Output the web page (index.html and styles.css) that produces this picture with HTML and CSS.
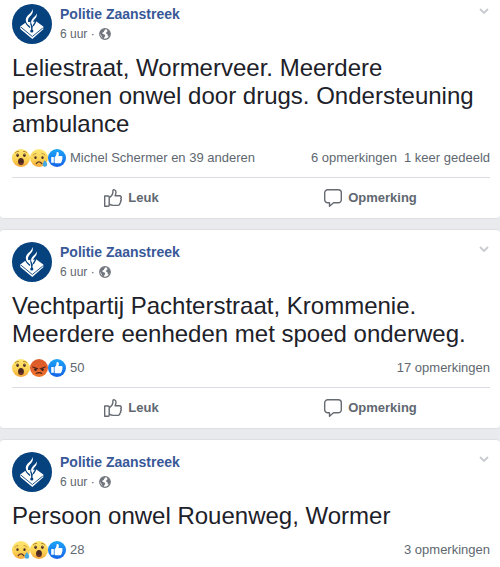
FILE: index.html
```html
<!DOCTYPE html>
<html lang="nl">
<head>
<meta charset="utf-8">
<meta name="viewport" content="width=device-width, initial-scale=1">
<title>Politie Zaanstreek</title>
<link rel="stylesheet" href="styles.css">
</head>
<body>
<svg class="sprite" aria-hidden="true">
  <defs>
    <linearGradient id="yellow" x1="0" y1="0" x2="0" y2="1"><stop offset="0" stop-color="#ffe874"/><stop offset=".6" stop-color="#fbd153"/><stop offset="1" stop-color="#f4a63a"/></linearGradient>
    <linearGradient id="red" x1="0" y1="0" x2="0" y2="1"><stop offset="0" stop-color="#dc5a28"/><stop offset=".5" stop-color="#e3602c"/><stop offset="1" stop-color="#f0782c"/></linearGradient>
    <linearGradient id="blue" x1="0" y1="0" x2="0" y2="1"><stop offset="0" stop-color="#1ba4f8"/><stop offset="1" stop-color="#1563e6"/></linearGradient>
  </defs>
  <symbol id="avatar" viewBox="0 0 40 40">
    <circle cx="20" cy="20" r="20" fill="#05427e"/>
    <path d="M8.300 22.500 14 18.200l10.500-.7 6.800 5v2.700L20.300 35 8.300 25z" fill="#fff"/>
    <path d="m9 23.200 11.300 9.300 10.500-8.500" fill="none" stroke="#05427e" stroke-width=".9"/>
    <path d="M13.300 17.500c1 2.500 2.700 4.200 4.700 6M19 18c-.5 2.500.7 3.500 1.200 5.500M23.500 16.500c.3 2.500-1.500 3.500-2.300 5.500" fill="none" stroke="#05427e" stroke-width="1.400"/>
    <circle cx="19.800" cy="27" r="1.600" fill="#05427e"/>
    <path d="M19.800 22v4" stroke="#05427e" stroke-width="1.400"/>
    <path d="M20.500 5c1.200 3.700-.8 5.600-2.800 7.700-2.500 2.800-2.300 5.500.8 9.800-4.500-3-6-6.500-3.500-10C17 10 20 8.500 20.500 5z" fill="#fff"/>
    <path d="M24.500 9.500c1 3-.8 4.500-2.500 6.500-1.500 1.800-1.800 3.500-.8 6-2.500-3-2.700-5-.7-7.300 1.800-2 3.500-3 4-5.200z" fill="#fff"/>
  </symbol>
  <symbol id="globe" viewBox="0 0 12 12">
    <circle cx="6" cy="6" r="5.300" fill="#fff" stroke="#70757d" stroke-width="1.200"/>
    <path d="M.8 5C1.300 2.700 3 1 5.500.9l1 .9-1.300.9-.4 1.200-1.600.8.600 1.200 1.800.5.800 1.500-1 1.200-.5 1.700C3 10.500 2.700 7.500.8 5zM7.500 1.200C9.700 1.700 11.300 3.700 11.200 6.200L10 8.700 8.800 8.200 8.600 6.500 7.200 5.700 7.400 4l1.300-.8z" fill="#70757d"/>
  </symbol>
  <symbol id="chevron" viewBox="0 0 10 6"><path d="m1 1 4 4 4-4" fill="none" stroke="#c7cacf" stroke-width="1.800"/></symbol>
  <symbol id="wow" viewBox="0 0 18 18">
    <circle cx="9" cy="9" r="9" fill="url(#yellow)"/>
    <path d="M3.300 3.700Q4.500 2 6.500 2.400M11.500 2.400q2-.4 3.200 1.300" fill="none" stroke="#ae7a2b" stroke-width=".9" stroke-linecap="round"/>
    <ellipse cx="5.600" cy="6.300" rx="1.300" ry="1.700" fill="#493027"/><ellipse cx="12.400" cy="6.300" rx="1.300" ry="1.700" fill="#493027"/>
    <circle cx="5.900" cy="5.600" r=".5" fill="#ad8a65"/><circle cx="12.700" cy="5.600" r=".5" fill="#ad8a65"/>
    <ellipse cx="9" cy="12.400" rx="2.900" ry="3.500" fill="#4b2822"/><path d="M7 14.400q2-2 4 0-2 2-4 0z" fill="#7b3429"/>
  </symbol>
  <symbol id="sad" viewBox="0 0 18 18">
    <circle cx="9" cy="9" r="9" fill="url(#yellow)"/>
    <path d="M3 6.200q1-1.500 3-1.700M12 4.500q2 .2 3 1.700" fill="none" stroke="#b58333" stroke-width=".8" stroke-linecap="round"/>
    <ellipse cx="5.500" cy="8.700" rx="1.200" ry="1.400" fill="#493027"/><ellipse cx="12.500" cy="8.700" rx="1.200" ry="1.400" fill="#493027"/>
    <path d="M6.300 14.500q2.700-3.200 5.400 0" fill="none" stroke="#5b3728" stroke-width="1.300" stroke-linecap="round"/>
    <path d="M14.900 11c1 1.700 2.300 3 2.300 4.500a2.300 2.300 0 0 1-4.600 0c0-1.500 1.300-2.800 2.300-4.500z" fill="#45a9df"/>
  </symbol>
  <symbol id="angry" viewBox="0 0 18 18">
    <circle cx="9" cy="9" r="9" fill="url(#red)"/>
    <path d="m2.800 8 5 1.700M15.200 8l-5 1.700" stroke="#50241a" stroke-width="1.200" stroke-linecap="round"/>
    <circle cx="5.500" cy="10.600" r="1.300" fill="#35201c"/><circle cx="12.500" cy="10.600" r="1.300" fill="#35201c"/>
    <path d="M6.300 14.300q2.700-1.500 5.400 0" fill="none" stroke="#47251b" stroke-width="1.200" stroke-linecap="round"/>
  </symbol>
  <symbol id="liked" viewBox="0 0 18 18">
    <circle cx="9" cy="9" r="9" fill="url(#blue)"/>
    <path d="M3.200 7.900h2.600v5.900H3.200zM6.600 8.200c1-.7 2-2 2-4.600 0-1.200 2.300-.9 2.300 1.100 0 1-.3 1.700-.5 2.300h3.100c1.200 0 1.500 1.400.6 2 .8.700.6 1.600-.2 2 .4.800.1 1.500-.5 1.800.1.900-.6 1.500-1.500 1.500H8.700c-.8 0-1.500-.2-2.100-.6z" fill="#fff"/>
  </symbol>
  <symbol id="like" viewBox="0 0 18 18">
    <path d="M.7 7h3.500a1 1 0 0 1 1 1v8.200a1 1 0 0 1-1 1H.7zM5.200 8.800C7.200 7.500 8.700 5.800 8.900 3.500V1.700C8.900.3 12 .3 12 3.300c0 1.300-.4 2.400-.9 3.500h4.300c1.900 0 2.300 1.800 1.300 2.700.9.800.7 2.100-.2 2.500.5 1 .1 1.900-.7 2.300.1 1.300-.6 2.100-1.900 2.100H9.300c-1.500 0-2.500-.3-4.100-1.200" fill="none" stroke="#666b72" stroke-width="1.400" stroke-linejoin="round"/>
  </symbol>
  <symbol id="comment" viewBox="0 0 18 18">
    <path d="M3.700.8h10.600a3 3 0 0 1 3 3v7a3 3 0 0 1-3 3H9.500l-4 3.400v-3.400H3.700a3 3 0 0 1-3-3v-7a3 3 0 0 1 3-3z" fill="none" stroke="#666b72" stroke-width="1.400" stroke-linejoin="round"/>
  </symbol>
</svg>

<main class="feed">
  <article class="post">
    <header class="post-header">
      <svg class="avatar" aria-hidden="true"><use href="#avatar"/></svg>
      <div class="byline">
        <a class="author" href="#">Politie Zaanstreek</a>
        <div class="meta">6 uur · <svg class="globe" aria-hidden="true"><use href="#globe"/></svg></div>
      </div>
      <button class="more" type="button" aria-label="Meer opties"><svg aria-hidden="true"><use href="#chevron"/></svg></button>
    </header>
    <p class="message">Leliestraat, Wormerveer. Meerdere personen onwel door drugs. Ondersteuning ambulance</p>
    <div class="stats">
      <div class="reactions"><svg><use href="#wow"/></svg><svg><use href="#sad"/></svg><svg><use href="#liked"/></svg></div>
      <span>Michel Schermer en 39 anderen</span>
      <div class="counts"><a href="#">6 opmerkingen</a><a href="#">1 keer gedeeld</a></div>
    </div>
    <div class="actions">
      <button type="button"><svg aria-hidden="true"><use href="#like"/></svg>Leuk</button>
      <button type="button"><svg aria-hidden="true"><use href="#comment"/></svg>Opmerking</button>
    </div>
  </article>

  <article class="post">
    <header class="post-header">
      <svg class="avatar" aria-hidden="true"><use href="#avatar"/></svg>
      <div class="byline">
        <a class="author" href="#">Politie Zaanstreek</a>
        <div class="meta">6 uur · <svg class="globe" aria-hidden="true"><use href="#globe"/></svg></div>
      </div>
      <button class="more" type="button" aria-label="Meer opties"><svg aria-hidden="true"><use href="#chevron"/></svg></button>
    </header>
    <p class="message">Vechtpartij Pachterstraat, Krommenie. Meerdere eenheden met spoed onderweg.</p>
    <div class="stats">
      <div class="reactions"><svg><use href="#wow"/></svg><svg><use href="#angry"/></svg><svg><use href="#liked"/></svg></div>
      <span>50</span>
      <div class="counts"><a href="#">17 opmerkingen</a></div>
    </div>
    <div class="actions">
      <button type="button"><svg aria-hidden="true"><use href="#like"/></svg>Leuk</button>
      <button type="button"><svg aria-hidden="true"><use href="#comment"/></svg>Opmerking</button>
    </div>
  </article>

  <article class="post">
    <header class="post-header">
      <svg class="avatar" aria-hidden="true"><use href="#avatar"/></svg>
      <div class="byline">
        <a class="author" href="#">Politie Zaanstreek</a>
        <div class="meta">6 uur · <svg class="globe" aria-hidden="true"><use href="#globe"/></svg></div>
      </div>
      <button class="more" type="button" aria-label="Meer opties"><svg aria-hidden="true"><use href="#chevron"/></svg></button>
    </header>
    <p class="message">Persoon onwel Rouenweg, Wormer</p>
    <div class="stats">
      <div class="reactions"><svg><use href="#sad"/></svg><svg><use href="#wow"/></svg><svg><use href="#liked"/></svg></div>
      <span>28</span>
      <div class="counts"><a href="#">3 opmerkingen</a></div>
    </div>
  </article>
</main>
</body>
</html>
```
FILE: styles.css
```css
* { box-sizing: border-box; }

body {
  margin: 0;
  background: #e9eaed;
  color: #606770;
  font: 13px/18px "Liberation Sans", Arial, sans-serif;
}

a { color: inherit; text-decoration: none; }

button {
  padding: 0;
  border: 0;
  background: none;
  color: inherit;
  font: inherit;
  cursor: pointer;
}

svg { display: block; flex: none; }

.sprite { position: absolute; width: 0; height: 0; }

.feed {
  display: flex;
  flex-direction: column;
  gap: 10px;
  min-height: 100vh;
}

.post {
  padding: 12px 10px 0 12px;
  background: #fff;
  border: solid #dddfe2;
  border-width: 1px 0;
  border-radius: 4px;
}

.post:first-child {
  padding-top: 4px;
  border-top: 0;
  border-radius: 0 0 4px 4px;
}

.post:last-child {
  flex: 1;
  border-bottom: 0;
  border-radius: 4px 4px 0 0;
}

.post-header {
  display: flex;
  align-items: flex-start;
  gap: 8px;
  height: 50px;
}

.avatar { width: 40px; height: 40px; }

.byline { flex: 1; }

.author {
  display: block;
  color: #385898;
  font-size: 14px;
  font-weight: bold;
  line-height: 21px;
}

.meta {
  display: flex;
  align-items: center;
  gap: 4px;
  font-size: 12px;
}

.globe { width: 12px; height: 12px; }

.more { padding: 4px 1px; }

.more svg { width: 10px; height: 6px; }

.message {
  margin: 0;
  padding-right: 8px;
  color: #1d2129;
  font-size: 24px;
  line-height: 28px;
}

.stats {
  display: flex;
  align-items: center;
  gap: 4px;
  height: 39px;
}

.reactions { display: flex; }

.reactions svg { width: 18px; height: 18px; }

.counts {
  display: flex;
  gap: 7px;
  margin-left: auto;
}

.actions {
  display: grid;
  grid-template-columns: 1fr 1fr;
  height: 41px;
  border-top: 1px solid #dadde1;
}

.actions button {
  display: flex;
  align-items: center;
  justify-content: center;
  gap: 6px;
  font-weight: bold;
}

.actions svg { width: 18px; height: 18px; }
```
